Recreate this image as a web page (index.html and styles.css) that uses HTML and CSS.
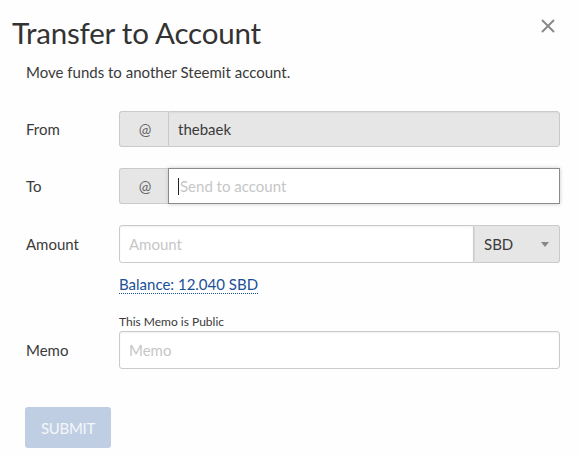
FILE: index.html
```html
<!DOCTYPE html>
<html>
<head>
<meta charset="utf-8">
<link rel="stylesheet" href="styles.css">
</head>
<body>
<div class="modal">
  <button class="close" aria-label="Close">
    <svg width="14" height="14" viewBox="0 0 14 14"><path d="M1 1 L13 13 M13 1 L1 13" stroke="#8a8a8a" stroke-width="2" fill="none"/></svg>
  </button>
  <h1 class="title">Transfer to Account</h1>
  <p class="intro">Move funds to another Steemit account.</p>

  <div class="row row-from">
    <label class="label">From</label>
    <div class="group">
      <span class="addon">@</span>
      <div class="field field-disabled">thebaek</div>
    </div>
  </div>

  <div class="row row-to">
    <label class="label">To</label>
    <div class="group">
      <span class="addon">@</span>
      <div class="field field-focus"><span class="caret"></span><span class="ph">Send to account</span></div>
    </div>
  </div>

  <div class="row row-amount">
    <label class="label">Amount</label>
    <div class="group group-tall">
      <div class="field field-plain"><span class="ph">Amount</span></div>
      <div class="select"><span>SBD</span><span class="arrow"></span></div>
    </div>
  </div>
  <div class="row row-balance">
    <span class="label"></span>
    <a class="balance">Balance: 12.040 SBD</a>
  </div>

  <div class="row row-hint">
    <span class="label"></span>
    <span class="hint">This Memo is Public</span>
  </div>
  <div class="row row-memo">
    <label class="label">Memo</label>
    <div class="group group-tall">
      <div class="field field-plain field-round"><span class="ph">Memo</span></div>
    </div>
  </div>

  <button class="submit">SUBMIT</button>
</div>
</body>
</html>
```

FILE: styles.css
```css
html, body {
  margin: 0;
  padding: 0;
  background: #fefefe;
}
body {
  font-family: "Source Sans Pro", Lato, "Liberation Sans", sans-serif;
  color: #3a3a3a;
}
.modal {
  position: relative;
  width: 579px;
  height: 456px;
  padding: 0;
  box-sizing: border-box;
}
.close {
  position: absolute;
  left: 541px;
  top: 19px;
  width: 14px;
  height: 14px;
  padding: 0;
  border: 0;
  background: none;
  display: block;
}
.close svg { display: block; }
.title {
  margin: 0;
  padding: 14px 0 0 12px;
  font-size: 29.5px;
  line-height: 38px;
  font-weight: 400;
  color: #333;
  letter-spacing: -0.2px;
}
.intro {
  margin: 10px 0 0 26px;
  font-size: 15px;
  line-height: 20px;
  color: #3a3a3a;
}
.row {
  display: flex;
  align-items: center;
  margin-left: 26px;
  width: 534px;
}
.label {
  width: 93px;
  flex: none;
  font-size: 15px;
  color: #3a3a3a;
}
.row-from { margin-top: 29px; }
.row-to { margin-top: 21px; }
.row-amount { margin-top: 21px; }
.row-balance { margin-top: 12px; }
.row-hint { margin-top: 20px; }
.row-memo { margin-top: 2px; }

.group {
  flex: 1;
  display: flex;
  height: 36px;
}
.group.group-tall { height: 38px; }
.addon {
  width: 49px;
  box-sizing: border-box;
  flex: none;
  display: flex;
  align-items: center;
  justify-content: center;
  background: #e6e6e6;
  border: 1px solid #cacaca;
  border-right: 0;
  border-radius: 3px 0 0 3px;
  font-size: 15px;
  color: #666;
  padding-left: 2px;
}
.field {
  flex: 1;
  display: flex;
  align-items: center;
  padding: 0 9px;
  font-size: 15px;
  border: 1px solid #cacaca;
  box-sizing: border-box;
}
.field-disabled {
  background: #e6e6e6;
  color: #3a3a3a;
  border-radius: 0 3px 3px 0;
  box-shadow: inset 0 1px 2px rgba(0,0,0,0.05);
}
.field-focus {
  background: #fff;
  border-color: #8a8a8a;
  box-shadow: 0 0 4px #cacaca;
  padding-left: 9px;
}
.field-plain {
  background: #fff;
  border-radius: 3px 0 0 3px;
  box-shadow: inset 0 1px 2px rgba(0,0,0,0.06);
}
.field-round { border-radius: 3px; }
.caret {
  display: inline-block;
  width: 1px;
  height: 17px;
  background: #222;
  margin-right: 1px;
}
.ph { color: #c6c6c6; }
.select {
  width: 86px;
  flex: none;
  box-sizing: border-box;
  display: flex;
  align-items: center;
  justify-content: space-between;
  padding: 0 10px 0 9px;
  background: #e6e6e6;
  border: 1px solid #cacaca;
  border-left: 1px solid #d8d8d8;
  border-radius: 0 3px 3px 0;
  font-size: 15px;
  color: #3a3a3a;
}
.arrow {
  width: 0;
  height: 0;
  border-left: 4px solid transparent;
  border-right: 4px solid transparent;
  border-top: 5px solid #888;
}
.balance {
  font-size: 15px;
  color: #1a5099;
  border-bottom: 1px dotted #1a5099;
  line-height: 18px;
}
.hint {
  font-size: 12px;
  color: #3a3a3a;
}
.submit {
  display: block;
  margin: 38px 0 0 25px;
  width: 86px;
  height: 41px;
  border: 0;
  border-radius: 3px;
  background: #bfcee2;
  color: #f4f7fb;
  font-family: inherit;
  font-size: 15px;
  letter-spacing: -0.3px;
}
```
